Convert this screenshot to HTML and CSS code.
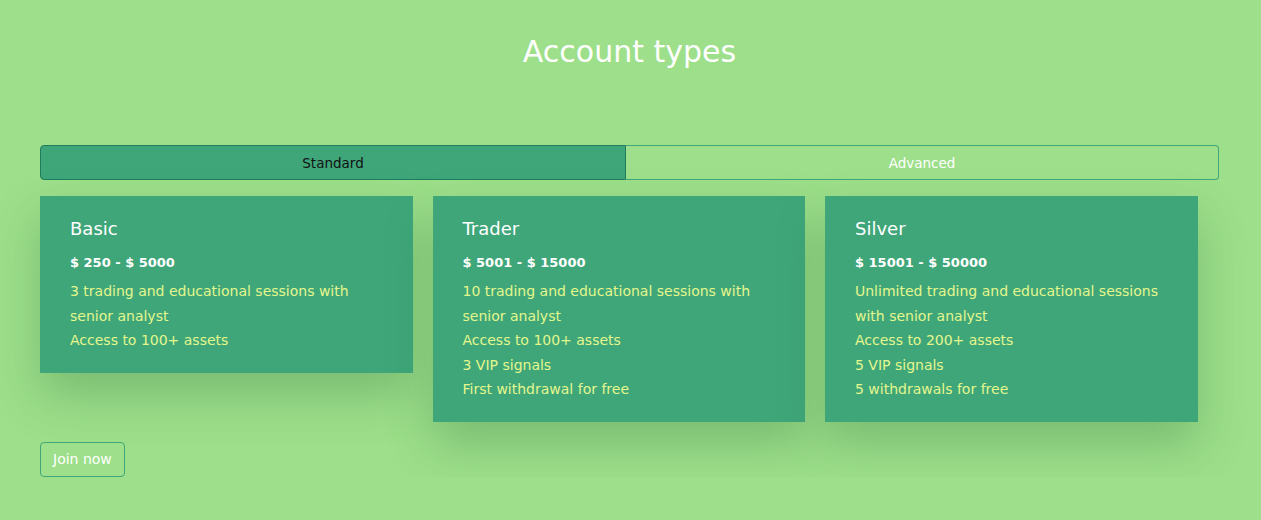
FILE: index.html
```html
<!DOCTYPE html>
<html lang="en">
<head>
  <meta charset="UTF-8">
  <meta name="viewport" content="width=device-width, initial-scale=1.0">
  <title>Account types</title>
  <link rel="stylesheet" href="styles.css">
</head>
<body>
<div class="container">
  <h1>Account types</h1>

  <div class="tabs">
    <button class="tab active">Standard</button>
    <button class="tab">Advanced</button>
  </div>

  <div class="cards">
    <div class="card">
      <h2>Basic</h2>
      <p class="price">$ 250 - $ 5000</p>
      <ul>
        <li>3 trading and educational sessions with senior analyst</li>
        <li>Access to 100+ assets</li>
      </ul>
    </div>
    <div class="card">
      <h2>Trader</h2>
      <p class="price">$ 5001 - $ 15000</p>
      <ul>
        <li>10 trading and educational sessions with senior analyst</li>
        <li>Access to 100+ assets</li>
        <li>3 VIP signals</li>
        <li>First withdrawal for free</li>
      </ul>
    </div>
    <div class="card">
      <h2>Silver</h2>
      <p class="price">$ 15001 - $ 50000</p>
      <ul>
        <li>Unlimited trading and educational sessions with senior analyst</li>
        <li>Access to 200+ assets</li>
        <li>5 VIP signals</li>
        <li>5 withdrawals for free</li>
      </ul>
    </div>
  </div>

  <button class="join">Join now</button>
</div>
</body>
</html>
```

FILE: styles.css
```css
body {
  font-family: "DejaVu Sans", sans-serif;
  background: #9ddf8a;
  margin: 0;
  padding: 0;
  color: #fff;
}
.container {
  padding: 30px 42px 0 40px;
}
h1 {
  font-size: 30px;
  font-weight: 500;
  text-align: center;
  margin: 2px 0 73px;
  line-height: 40px;
}
.tabs {
  display: flex;
  margin-bottom: 16px;
}
.tab {
  flex: 1 1 593px;
  height: 35px;
  font-family: inherit;
  font-size: 13.5px;
  background: transparent;
  color: #fff;
  border: 1px solid #3fa67a;
  border-left: none;
  border-radius: 0 4px 4px 0;
  cursor: pointer;
}
.tab.active {
  flex-basis: 586px;
  background: #3fa67a;
  color: #111;
  border: 1px solid #1f7d5c;
  border-radius: 4px 0 0 4px;
}
.cards {
  display: flex;
  align-items: flex-start;
  gap: 20px;
  margin-bottom: 20px;
}
.card {
  width: 372.5px;
  box-sizing: border-box;
  background: #3fa67a;
  padding: 19px 30px 20px;
  box-shadow: 0 22px 44px rgba(40, 110, 60, 0.3);
}
.card h2 {
  font-size: 18px;
  font-weight: 500;
  margin: 0 0 9px;
  line-height: 28px;
}
.price {
  font-size: 13px;
  font-weight: bold;
  margin: 0 0 5px;
  line-height: 22px;
}
.card ul {
  list-style: none;
  margin: 0;
  padding: 0;
}
.card li {
  font-size: 14px;
  line-height: 24.5px;
  color: #e4f68c;
}
.join {
  font-family: inherit;
  font-size: 14px;
  color: #fff;
  background: transparent;
  border: 1px solid #3fa67a;
  border-radius: 4px;
  height: 35px;
  padding: 0 12px;
  cursor: pointer;
}
```
